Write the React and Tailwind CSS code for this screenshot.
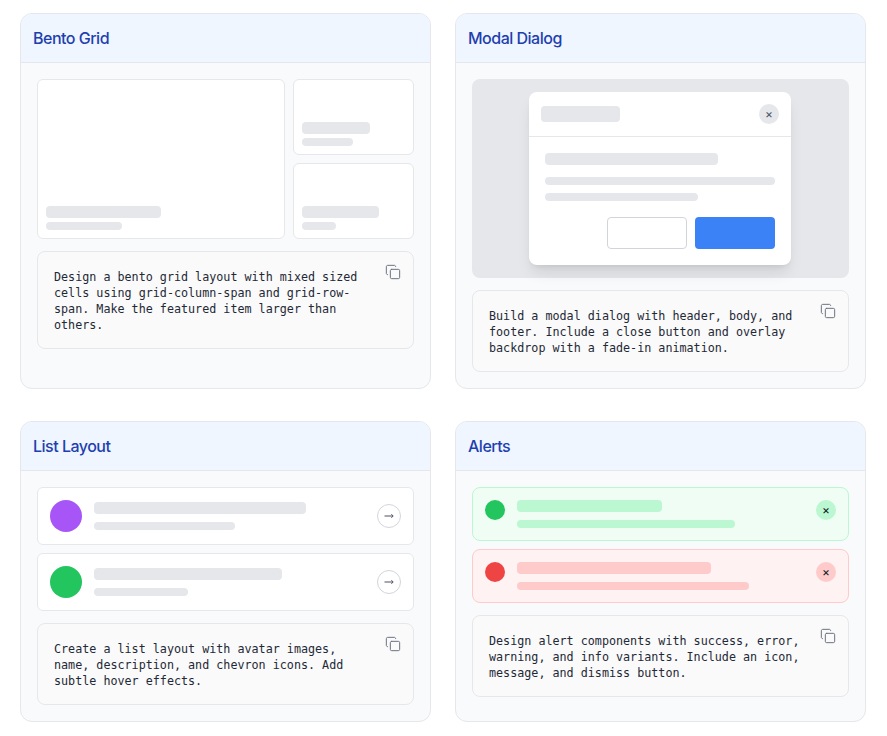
import React from "react";
import { Copy } from "lucide-react";

function Card({ title, children }) {
  return (
    <div className="border border-[#e5e7eb] rounded-xl bg-[#f9fafb] overflow-hidden">
      <div className="h-[49px] flex items-center px-3 bg-[#eff6ff] border-b border-[#e5e7eb]">
        <h2 className="text-base tracking-[-0.5px] font-medium text-[#1e40af]">{title}</h2>
      </div>
      <div className="p-4 flex flex-col gap-3">{children}</div>
    </div>
  );
}

function Prompt({ text }) {
  return (
    <div className="relative bg-[#fafafa] border border-[#e5e7eb] rounded-lg pt-[17px] pb-[15px] pl-4 pr-10">
      <p className="font-['DejaVu_Sans_Mono',monospace] text-[11.72px] leading-4 text-[#1f2937]">{text}</p>
      <Copy size={16} strokeWidth={1.5} className="absolute top-3 right-3 text-[#6b7280]" />
    </div>
  );
}

function BentoCell({ a, b, className }) {
  return (
    <div className={"bg-white border border-[#e5e7eb] rounded-md p-2 flex flex-col justify-end gap-1 " + className}>
      <div className={"h-3 rounded bg-[#e5e7eb] " + a}></div>
      <div className={"h-2 rounded bg-[#e5e7eb] " + b}></div>
    </div>
  );
}

function ListRow({ color, a, b }) {
  return (
    <div className="flex items-center bg-white border border-[#e5e7eb] rounded-md p-3">
      <div className={"w-8 h-8 rounded-full mr-3 shrink-0 " + color}></div>
      <div className="flex-1 flex flex-col gap-2">
        <div className={"h-3 rounded bg-[#e5e7eb] " + a}></div>
        <div className={"h-2 rounded bg-[#e5e7eb] " + b}></div>
      </div>
      <div className="w-6 h-6 rounded-full border border-[#d1d5db] flex items-center justify-center text-[#4b5563]">
        <svg width="10" height="6" viewBox="0 0 10 6" fill="none" stroke="currentColor" className="-mt-px">
          <path d="M0.5 3H9" strokeWidth="1.1" />
          <path d="M7.4 1.2L9.2 3L7.4 4.8" strokeWidth="1" />
        </svg>
      </div>
    </div>
  );
}

function Alert({ box, dot, bar, a, b }) {
  return (
    <div className={"flex items-start border rounded-lg p-3 " + box}>
      <div className={"w-5 h-5 rounded-full mr-3 shrink-0 " + dot}></div>
      <div className="w-[290px] flex flex-col gap-2">
        <div className={"h-3 rounded " + bar + " " + a}></div>
        <div className={"h-2 rounded " + bar + " " + b}></div>
      </div>
      <div className={"ml-auto w-5 h-5 rounded-full flex items-center justify-center text-xs leading-none text-[#111827] " + bar}>×</div>
    </div>
  );
}

export default function App() {
  return (
    <div className="min-h-[736px] bg-white pt-[13px] pl-5 pr-[21px] font-['Inter',sans-serif]">
      <div className="grid grid-cols-2 gap-x-6 gap-y-8">
        <Card title="Bento Grid">
          <div className="grid grid-cols-[248px_121px] grid-rows-[76px_76px] gap-2">
            <BentoCell className="row-span-2" a="w-[115px]" b="w-[76px]" />
            <BentoCell a="w-[68px]" b="w-[51px]" />
            <BentoCell a="w-[77px]" b="w-[34px]" />
          </div>
          <Prompt text="Design a bento grid layout with mixed sized cells using grid-column-span and grid-row-span. Make the featured item larger than others." />
        </Card>

        <Card title="Modal Dialog">
          <div className="h-[199px] bg-[#e5e7eb] rounded-lg flex items-center pl-[57px]">
            <div className="w-[262px] bg-white rounded-lg shadow-lg">
              <div className="h-[45px] flex items-center justify-between px-3 border-b border-[#e5e7eb]">
                <div className="w-[79px] h-4 rounded bg-[#e5e7eb]"></div>
                <div className="w-5 h-5 rounded-full bg-[#e5e7eb] flex items-center justify-center text-xs leading-none text-[#4b5563]">×</div>
              </div>
              <div className="p-4">
                <div className="w-[173px] h-3 rounded bg-[#e5e7eb]"></div>
                <div className="mt-3 h-2 rounded bg-[#e5e7eb]"></div>
                <div className="mt-2 w-[153px] h-2 rounded bg-[#e5e7eb]"></div>
                <div className="mt-4 flex justify-end gap-2">
                  <div className="w-20 h-8 rounded bg-white border border-[#d1d5db]"></div>
                  <div className="w-20 h-8 rounded bg-[#3b82f6]"></div>
                </div>
              </div>
            </div>
          </div>
          <Prompt text="Build a modal dialog with header, body, and footer. Include a close button and overlay backdrop with a fade-in animation." />
        </Card>

        <Card title="List Layout">
          <div className="flex flex-col gap-2">
            <ListRow color="bg-[#a855f7]" a="w-[212px]" b="w-[141px]" />
            <ListRow color="bg-[#22c55e]" a="w-[188px]" b="w-[94px]" />
          </div>
          <Prompt text="Create a list layout with avatar images, name, description, and chevron icons. Add subtle hover effects." />
        </Card>

        <Card title="Alerts">
          <div className="flex flex-col gap-2">
            <Alert box="bg-[#f0fdf4] border-[#bbf7d0]" dot="bg-[#22c55e]" bar="bg-[#bbf7d0]" a="w-[145px]" b="w-[218px]" />
            <Alert box="bg-[#fef2f2] border-[#fecaca]" dot="bg-[#ef4444]" bar="bg-[#fecaca]" a="w-[194px]" b="w-[232px]" />
          </div>
          <Prompt text="Design alert components with success, error, warning, and info variants. Include an icon, message, and dismiss button." />
        </Card>
      </div>
    </div>
  );
}
